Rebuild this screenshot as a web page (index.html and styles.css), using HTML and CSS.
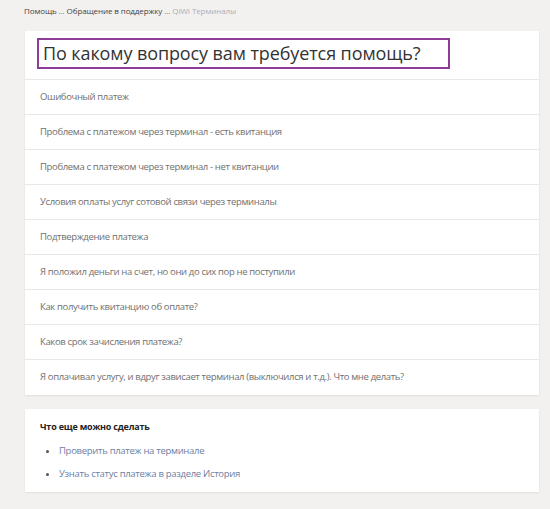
FILE: index.html
```html
<!DOCTYPE html>
<html lang="ru">
<head>
    <meta charset="UTF-8">
    <title>QIWI Помощь</title>
    <link rel="stylesheet" href="styles.css">
</head>
<body>
    <div class="breadcrumbs">
        <a href="#">Помощь</a> <span class="sep">...</span>
        <a href="#">Обращение в поддержку</a> <span class="sep">...</span>
        <span class="current">QIWI Терминалы</span>
    </div>

    <div class="card">
        <div class="card-title">
            <h1 class="question">По какому вопросу вам требуется помощь?</h1>
        </div>
        <ul class="topic-list">
            <li class="topic-item">Ошибочный платеж</li>
            <li class="topic-item">Проблема с платежом через терминал - есть квитанция</li>
            <li class="topic-item">Проблема с платежом через терминал - нет квитанции</li>
            <li class="topic-item">Условия оплаты услуг сотовой связи через терминалы</li>
            <li class="topic-item">Подтверждение платежа</li>
            <li class="topic-item">Я положил деньги на счет, но они до сих пор не поступили</li>
            <li class="topic-item">Как получить квитанцию об оплате?</li>
            <li class="topic-item">Каков срок зачисления платежа?</li>
            <li class="topic-item">Я оплачивал услугу, и вдруг зависает терминал (выключился и т.д.). Что мне делать?</li>
        </ul>
    </div>

    <div class="card more">
        <div class="more-title">Что еще можно сделать</div>
        <ul class="more-list">
            <li><a href="#">Проверить платеж на терминале</a></li>
            <li><a href="#">Узнать статус платежа в разделе История</a></li>
        </ul>
    </div>
</body>
</html>
```

FILE: styles.css
```css
* {
    margin: 0;
    padding: 0;
    box-sizing: border-box;
}

body {
    font-family: 'Open Sans', 'DejaVu Sans', sans-serif;
    background: #f2f1ef;
    width: 550px;
    height: 509px;
    overflow: hidden;
    padding: 5px 11px 0 25px;
    color: #333;
}

a {
    text-decoration: none;
}

.breadcrumbs {
    font-size: 8px;
    letter-spacing: -0.1px;
    color: #444;
    height: 26px;
    line-height: 12px;
    margin-left: -1px;
}

.breadcrumbs a {
    color: #444;
}

.breadcrumbs .sep {
    color: #777;
}

.breadcrumbs .current {
    color: #aab0b8;
}

.card {
    background: #fff;
    box-shadow: 0 1px 2px rgba(0, 0, 0, 0.08);
}

.card-title {
    height: 49px;
    padding: 7px 0 0 12px;
    border-bottom: 1px solid #e8e8e8;
}

.question {
    display: inline-block;
    white-space: nowrap;
    border: 2px solid #8e3c98;
    height: 31px;
    width: 413px;
    padding: 0 0 0 4px;
    font-size: 18px;
    letter-spacing: -0.1px;
    font-weight: normal;
    line-height: 27px;
    color: #333;
}

.topic-list {
    list-style: none;
}

.topic-item {
    height: 35px;
    line-height: 34px;
    padding-left: 15px;
    font-size: 9.5px;
    letter-spacing: -0.35px;
    color: #707070;
    border-bottom: 1px solid #e8e8e8;
}

.topic-item:last-child {
    border-bottom: none;
}

.more {
    margin-top: 14px;
    height: 83px;
    padding: 11px 0 0 15px;
}

.more-title {
    font-size: 9px;
    letter-spacing: -0.2px;
    font-weight: bold;
    color: #222;
    margin-bottom: 6px;
}

.more-list {
    padding-left: 19px;
    font-size: 9.5px;
    letter-spacing: -0.3px;
    line-height: 23px;
}

.more-list li {
    color: #555;
}

.more-list a {
    color: #6d7ea3;
}
```
